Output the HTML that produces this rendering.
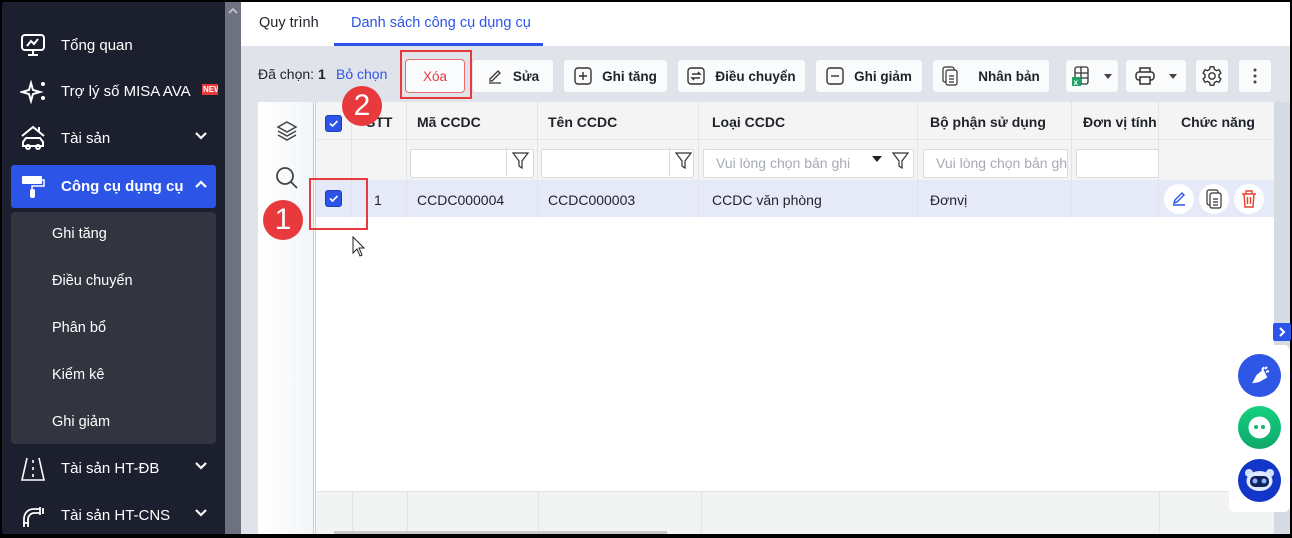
<!DOCTYPE html>
<html><head><meta charset="utf-8"><style>
*{box-sizing:border-box;margin:0;padding:0}
body{width:1292px;height:534px;overflow:hidden;background:#000;font-family:"Liberation Sans",sans-serif;font-size:14px;position:relative}
.abs{position:absolute}
#side{left:2px;top:2px;width:223px;height:532px;background:#1c1f2d;color:#fff}
.mi{position:absolute;left:0;width:223px;height:46px;display:flex;align-items:center;font-size:15px}
.mi .t{position:absolute;left:59px}
.mi .ch{position:absolute;left:192px;top:16px}
.sub{position:absolute;left:50px;font-size:14.5px;color:#fff}
#scroll{left:225px;top:2px;width:16px;height:532px;background:#6f7280}
#main{left:241px;top:2px;width:1049px;height:532px;background:#e0e3ea}
.btn{position:absolute;top:57px;height:34px;background:#fafbfc;border:1px solid #dfe2e8;border-radius:4px;display:flex;align-items:center;justify-content:center;font-size:13.5px;font-weight:bold;color:#1f2329;gap:10px}
.inp{position:absolute;top:147px;height:29px;background:#fff;border:1px solid #d8dbe0;border-radius:2px;color:#a7abb2;font-size:14px;line-height:27px;padding-left:12px;overflow:hidden;white-space:nowrap}
.td{position:absolute;top:180px;height:37px;line-height:37px;font-size:14px;color:#1f2329}
.cb{position:absolute;width:17px;height:17px;background:#2c55e8;border-radius:3px;border:1px solid #1d3fbf}
.circ{position:absolute;width:30px;height:30px;border-radius:50%;background:#fff;display:flex;align-items:center;justify-content:center}
</style></head><body>
<div id="side" class="abs">
 <div class="mi" style="top:20px"><svg class="abs" style="left:18px;top:11px" width="26" height="24" viewBox="0 0 26 24" fill="none" stroke="#fff" stroke-width="2"><rect x="2" y="2" width="22" height="15" rx="3"/><path d="M7 13l4-5 3 3 4-5M13 17v4M8 22h10"/></svg><span class="t">Tổng quan</span></div>
 <div class="mi" style="top:66px"><svg class="abs" style="left:18px;top:12px" width="26" height="24" viewBox="0 0 26 24" fill="none" stroke="#fff" stroke-width="2"><path d="M11 3l2 7 7 2-7 2-2 7-2-7-7-2 7-2z"/><circle cx="23" cy="4" r="1"/><circle cx="23" cy="18" r="1"/></svg><span class="t">Trợ lý số MISA AVA</span><span class="abs" style="left:200px;top:16px;width:16px;height:11px;background:#e63a3f;font-size:8px;font-weight:bold;line-height:11px;padding-left:1px;overflow:hidden">NEW</span></div>
 <div class="mi" style="top:113px"><svg class="abs" style="left:17px;top:9px" width="28" height="28" viewBox="0 0 28 28" fill="none" stroke="#fff" stroke-width="2"><path d="M3 12l11-9 11 9M20 3v5"/><path d="M4 22v-4l3-4h14l3 4v4z"/><circle cx="9" cy="23" r="2"/><circle cx="19" cy="23" r="2"/></svg><span class="t">Tài sản</span><svg class="ch" width="14" height="10" viewBox="0 0 14 10"><path d="M2 2l5 5 5-5" stroke="#fff" stroke-width="2.2" fill="none"/></svg></div>
 <div class="abs" style="left:9px;top:163px;width:205px;height:43px;background:#2c55e8;border-radius:3px"></div>
 <div class="mi" style="top:161px"><svg class="abs" style="left:18px;top:11px" width="26" height="26" viewBox="0 0 26 26" fill="#fff"><rect x="2" y="2" width="20" height="8" rx="1"/><path d="M22 6h2v6H12v3" stroke="#fff" stroke-width="1.5" fill="none"/><rect x="10" y="15" width="5" height="9" rx="2"/></svg><span class="t" style="font-weight:bold">Công cụ dụng cụ</span><svg class="ch" width="14" height="10" viewBox="0 0 14 10"><path d="M2 8l5-5 5 5" stroke="#fff" stroke-width="2.2" fill="none"/></svg></div>
 <div class="abs" style="left:9px;top:210px;width:205px;height:232px;background:#32343f;border-radius:4px"></div>
 <div class="sub" style="top:224px">Ghi tăng</div>
 <div class="sub" style="top:271px">Điều chuyển</div>
 <div class="sub" style="top:318px">Phân bổ</div>
 <div class="sub" style="top:365px">Kiểm kê</div>
 <div class="sub" style="top:412px">Ghi giảm</div>
 <div class="mi" style="top:443px"><svg class="abs" style="left:18px;top:11px" width="26" height="26" viewBox="0 0 26 26" fill="none" stroke="#fff" stroke-width="1.6"><path d="M7 2L2 24h22L19 2"/><path d="M13 4v3M13 11v3M13 18v3"/></svg><span class="t">Tài sản HT-ĐB</span><svg class="ch" width="14" height="10" viewBox="0 0 14 10"><path d="M2 2l5 5 5-5" stroke="#fff" stroke-width="2.2" fill="none"/></svg></div>
 <div class="mi" style="top:490px"><svg class="abs" style="left:18px;top:11px" width="26" height="26" viewBox="0 0 26 26" fill="none" stroke="#fff" stroke-width="1.8"><path d="M4 24v-8c0-6 4-10 10-10h6M8 24v-8c0-3 3-6 6-6h6M20 4v8M23 5v6M3 20h6"/></svg><span class="t">Tài sản HT-CNS</span><svg class="ch" width="14" height="10" viewBox="0 0 14 10"><path d="M2 2l5 5 5-5" stroke="#fff" stroke-width="2.2" fill="none"/></svg></div>
</div>
<div id="scroll" class="abs"><svg class="abs" style="left:3px;top:5px" width="10" height="7"><path d="M1 6l4-4 4 4" stroke="#c8cad0" stroke-width="1.6" fill="none"/></svg><div class="abs" style="left:0;top:18px;width:16px;height:514px;background:#6e717f"></div></div>
<div id="main" class="abs">
 <div class="abs" style="left:0;top:0;width:1049px;height:44px;background:#fff"></div>
 <div class="abs" style="left:18px;top:13px;font-size:14.5px;color:#1f2329">Quy trình</div>
 <div class="abs" style="left:110px;top:13px;font-size:14.5px;color:#2c55e8">Danh sách công cụ dụng cụ</div>
 <div class="abs" style="left:93px;top:41px;width:209px;height:3px;background:#2c55e8"></div>
 <div class="abs" style="left:17px;top:64px;font-size:14px;color:#1f2329">Đã chọn: <b>1</b></div>
 <div class="abs" style="left:95px;top:64px;font-size:14px;color:#2c55e8">Bỏ chọn</div>
 <div class="btn" style="left:164px;width:60px;border-color:#e86a6a;color:#e8393c;font-weight:normal;top:57px">Xóa</div>
 <div class="abs" style="left:159px;top:48px;width:72px;height:49px;border:2px solid #e8393c"></div>
 <div class="btn" style="left:231px;width:82px"><svg width="16" height="16" viewBox="0 0 16 16" fill="none" stroke="#333" stroke-width="1.3"><path d="M3 11l8-8 2 2-8 8H3zM2 15h12"/></svg>Sửa</div>
 <div class="btn" style="left:322px;width:105px"><svg width="18" height="18" viewBox="0 0 18 18" fill="none" stroke="#333" stroke-width="1.4"><rect x="1" y="1" width="16" height="16" rx="3"/><path d="M9 5v8M5 9h8"/></svg>Ghi tăng</div>
 <div class="btn" style="left:436px;width:129px"><svg width="18" height="18" viewBox="0 0 18 18" fill="none" stroke="#333" stroke-width="1.4"><rect x="1" y="1" width="16" height="16" rx="3"/><path d="M5 7h8l-2-2M13 11H5l2 2"/></svg>Điều chuyển</div>
 <div class="btn" style="left:574px;width:108px"><svg width="18" height="18" viewBox="0 0 18 18" fill="none" stroke="#333" stroke-width="1.4"><rect x="1" y="1" width="16" height="16" rx="3"/><path d="M5 9h8"/></svg>Ghi giảm</div>
 <div class="btn" style="left:691px;width:118px;gap:20px"><svg width="16" height="20" viewBox="0 0 16 20" fill="none" stroke="#333" stroke-width="1.2"><rect x="1" y="1" width="11" height="15" rx="2"/><rect x="4" y="4" width="11" height="15" rx="2" fill="#fafbfc"/><path d="M7 10h5M7 13h5M7 16h5"/></svg>Nhân bản</div>
 <div class="btn" style="left:824px;width:54px;gap:14px"><svg width="18" height="20" viewBox="0 0 18 20"><rect x="3" y="1" width="13" height="17" rx="2" fill="none" stroke="#333" stroke-width="1.3"/><path d="M3 7h13M3 12h13M9 1v17" stroke="#333" stroke-width="1.3"/><rect x="0" y="11" width="9" height="9" fill="#21a366"/><text x="1.5" y="19" font-size="8" fill="#fff" font-family="Liberation Sans">x</text></svg><svg width="8" height="5"><path d="M0 0h8L4 5z" fill="#444"/></svg></div>
 <div class="btn" style="left:884px;width:62px;gap:14px"><svg width="20" height="18" viewBox="0 0 20 18" fill="none" stroke="#333" stroke-width="1.5"><path d="M5 5V1h10v4"/><rect x="1" y="5" width="18" height="8" rx="3"/><rect x="5" y="10" width="10" height="7" fill="#fafbfc"/></svg><svg width="8" height="5"><path d="M0 0h8L4 5z" fill="#444"/></svg></div>
 <div class="btn" style="left:954px;width:34px"><svg width="22" height="22" viewBox="0 0 24 24" fill="none" stroke="#333" stroke-width="1.5"><circle cx="12" cy="12" r="3.5"/><path d="M10 2h4l.6 2.8 2.4 1.4 2.7-.9 2 3.4-2.1 1.9v2.8l2.1 1.9-2 3.4-2.7-.9-2.4 1.4L14 22h-4l-.6-2.8-2.4-1.4-2.7.9-2-3.4 2.1-1.9v-2.8L2.3 8.7l2-3.4 2.7.9 2.4-1.4z"/></svg></div>
 <div class="btn" style="left:997px;width:34px"><svg width="4" height="16"><circle cx="2" cy="2" r="1.5" fill="#444"/><circle cx="2" cy="8" r="1.5" fill="#444"/><circle cx="2" cy="14" r="1.5" fill="#444"/></svg></div>

 <div class="abs" style="left:17px;top:100px;width:1016px;height:432px;background:#fff"></div>
 <div class="abs" style="left:17px;top:100px;width:56px;height:432px;background:linear-gradient(90deg,#fff,#f2f5f8)"></div>
 <div class="abs" style="left:72px;top:100px;width:3px;height:432px;border-left:1px solid #c9ccd2;border-right:1px solid #c9ccd2"></div>
 <svg class="abs" style="left:35px;top:118px" width="22" height="22" viewBox="0 0 22 22" fill="none" stroke="#444" stroke-width="1.5"><path d="M11 2l9 5-9 5-9-5z"/><path d="M2 11l9 5 9-5M2 15l9 5 9-5"/></svg>
 <svg class="abs" style="left:34px;top:164px" width="24" height="24" viewBox="0 0 24 24" fill="none" stroke="#444" stroke-width="1.8"><circle cx="10" cy="10" r="8"/><path d="M16 16l6 6"/></svg>
 <div class="abs" style="left:75px;top:100px;width:958px;height:38px;background:#f4f4f5;border-bottom:1px solid #e6e7ea"></div>
 <div class="abs" style="left:75px;top:138px;width:958px;height:40px;background:#f4f4f5"></div>
 <div class="abs" style="left:75px;top:178px;width:958px;height:37px;background:#e6e9f8"></div>
 <div class="abs" style="left:75px;top:489px;width:958px;height:43px;background:#f2f3f3;border-top:1px solid #e2e3e5"></div>
 <div class="abs" style="left:110px;top:100px;width:1px;height:115px;background:#e3e4e8"></div>
 <div class="abs" style="left:165px;top:100px;width:1px;height:115px;background:#e3e4e8"></div>
 <div class="abs" style="left:296px;top:100px;width:1px;height:115px;background:#e3e4e8"></div>
 <div class="abs" style="left:457px;top:100px;width:1px;height:115px;background:#e3e4e8"></div>
 <div class="abs" style="left:676px;top:100px;width:1px;height:115px;background:#e3e4e8"></div>
 <div class="abs" style="left:830px;top:100px;width:1px;height:115px;background:#e3e4e8"></div>
 <div class="abs" style="left:917px;top:100px;width:1px;height:115px;background:#e3e4e8"></div>
 <div class="abs" style="left:111px;top:489px;width:1px;height:43px;background:#e3e4e8"></div>
 <div class="abs" style="left:166px;top:489px;width:1px;height:43px;background:#e3e4e8"></div>
 <div class="abs" style="left:297px;top:489px;width:1px;height:43px;background:#e3e4e8"></div>
 <div class="abs" style="left:460px;top:489px;width:1px;height:43px;background:#e3e4e8"></div>
 <div class="abs" style="left:918px;top:489px;width:1px;height:43px;background:#e3e4e8"></div>
 <div class="abs" style="left:93px;top:529px;width:333px;height:3px;background:#c8c9cc"></div>

 <div class="cb" style="left:84px;top:113px"><svg width="15" height="15" viewBox="0 0 15 15"><path d="M4 7.5l2.5 2.5 5-5" stroke="#fff" stroke-width="1.6" fill="none"/></svg></div>
 <div class="abs" style="left:125px;top:112px;font-weight:bold;color:#1f2329">STT</div>
 <div class="abs" style="left:176px;top:112px;font-weight:bold;color:#1f2329">Mã CCDC</div>
 <div class="abs" style="left:307px;top:112px;font-weight:bold;color:#1f2329">Tên CCDC</div>
 <div class="abs" style="left:471px;top:112px;font-weight:bold;color:#1f2329">Loại CCDC</div>
 <div class="abs" style="left:689px;top:112px;font-weight:bold;color:#1f2329">Bộ phận sử dụng</div>
 <div class="abs" style="left:842px;top:112px;font-weight:bold;color:#1f2329">Đơn vị tính</div>
 <div class="abs" style="left:940px;top:112px;font-weight:bold;color:#1f2329">Chức năng</div>

 <div class="inp" style="left:169px;width:124px"></div>
 <div class="abs" style="left:265px;top:145px;width:1px;height:29px;background:#d8dbe0"></div>
 <svg class="abs" style="left:271px;top:150px" width="17" height="18" viewBox="0 0 17 18" fill="none" stroke="#333" stroke-width="1.2"><path d="M1 1h15l-6 8v7l-3-2V9z"/></svg>
 <div class="inp" style="left:300px;width:153px"></div>
 <div class="abs" style="left:428px;top:145px;width:1px;height:29px;background:#d8dbe0"></div>
 <svg class="abs" style="left:434px;top:150px" width="17" height="18" viewBox="0 0 17 18" fill="none" stroke="#333" stroke-width="1.2"><path d="M1 1h15l-6 8v7l-3-2V9z"/></svg>
 <div class="inp" style="left:462px;width:211px">Vui lòng chọn bản ghi</div>
 <svg class="abs" style="left:631px;top:154px" width="10" height="6"><path d="M0 0h10L5 6z" fill="#222"/></svg>
 <svg class="abs" style="left:651px;top:150px" width="17" height="18" viewBox="0 0 17 18" fill="none" stroke="#333" stroke-width="1.2"><path d="M1 1h15l-6 8v7l-3-2V9z"/></svg>
 <div class="inp" style="left:682px;width:145px">Vui lòng chọn bản ghi</div>
 <div class="inp" style="left:835px;width:83px"></div>

 <div class="cb" style="left:84px;top:188px"><svg width="15" height="15" viewBox="0 0 15 15"><path d="M4 7.5l2.5 2.5 5-5" stroke="#fff" stroke-width="1.6" fill="none"/></svg></div>
 <div class="td" style="left:133px">1</div>
 <div class="td" style="left:176px">CCDC000004</div>
 <div class="td" style="left:307px">CCDC000003</div>
 <div class="td" style="left:471px">CCDC văn phòng</div>
 <div class="td" style="left:689px">Đơnvị</div>
 <div class="circ" style="left:923px;top:182px"><svg width="16" height="16" viewBox="0 0 16 16" fill="none" stroke="#2c55e8" stroke-width="1.4"><path d="M3 12l1-3 7-7 2 2-7 7zM2 14h12"/></svg></div>
 <div class="circ" style="left:958px;top:182px"><svg width="16" height="20" viewBox="0 0 16 20" fill="none" stroke="#333" stroke-width="1.2"><rect x="1" y="1" width="11" height="15" rx="2"/><rect x="4" y="4" width="11" height="15" rx="2" fill="#fff"/><path d="M7 10h5M7 13h5M7 16h5"/></svg></div>
 <div class="circ" style="left:993px;top:182px"><svg width="16" height="18" viewBox="0 0 16 18" fill="none" stroke="#e8402c" stroke-width="1.4"><path d="M1 4h14M5 4V1h6v3M3 4l1 13h8l1-13M6.5 7v7M9.5 7v7"/></svg></div>

 <div class="abs" style="left:68px;top:176px;width:59px;height:52px;border:2px solid #e8393c"></div>
 <div class="abs" style="left:22px;top:198px;width:40px;height:40px;border-radius:50%;background:#e8393c;color:#fff;font-size:30px;text-align:center;line-height:40px">1</div>
 <div class="abs" style="left:101px;top:84px;width:40px;height:40px;border-radius:50%;background:#e8393c;color:#fff;font-size:30px;text-align:center;line-height:40px">2</div>
 <svg class="abs" style="left:111px;top:234px" width="14" height="22" viewBox="0 0 14 22"><path d="M1 1v16l4-4 3 7 2-1-3-7h5z" fill="#fff" stroke="#222" stroke-width="1"/></svg>

 <div class="abs" style="left:1033px;top:100px;width:16px;height:432px;background:#d6dae3"></div>
 <div class="abs" style="left:1032px;top:321px;width:18px;height:18px;background:#2c55e8;border-radius:2px"><svg width="18" height="18"><path d="M7 5l4 4-4 4" stroke="#fff" stroke-width="2" fill="none"/></svg></div>
 <div class="abs" style="left:988px;top:343px;width:61px;height:167px;background:#fff;border-radius:6px"></div>
 <div class="abs" style="left:997px;top:352px;width:43px;height:43px;border-radius:50%;background:#2f57e6"><svg width="43" height="43" viewBox="0 0 43 43"><path d="M16 28l3-6 6-5 3 6-7 4zM24 16l2-3M28 18l3-1M27 15l2-2" stroke="#fff" stroke-width="2" fill="#fff"/></svg></div>
 <div class="abs" style="left:997px;top:404px;width:43px;height:43px;border-radius:50%;background:linear-gradient(#14d07f,#0fa86a)"><svg width="43" height="43"><circle cx="21.5" cy="21.5" r="11" fill="#fff"/><circle cx="18" cy="21" r="2" fill="#13b472"/><circle cx="25" cy="21" r="2" fill="#13b472"/></svg></div>
 <div class="abs" style="left:997px;top:457px;width:43px;height:43px;border-radius:50%;background:#1237c8"><svg width="43" height="43"><circle cx="11" cy="14" r="4" fill="#cfe0ff"/><circle cx="32" cy="14" r="4" fill="#cfe0ff"/><ellipse cx="21.5" cy="22" rx="13" ry="10" fill="#dfe9ff"/><rect x="12" y="17" width="19" height="11" rx="5" fill="#10235e"/><circle cx="17" cy="22" r="2.5" fill="#8fb0ff"/><circle cx="26" cy="22" r="2.5" fill="#8fb0ff"/></svg></div>
</div>
</body></html>
